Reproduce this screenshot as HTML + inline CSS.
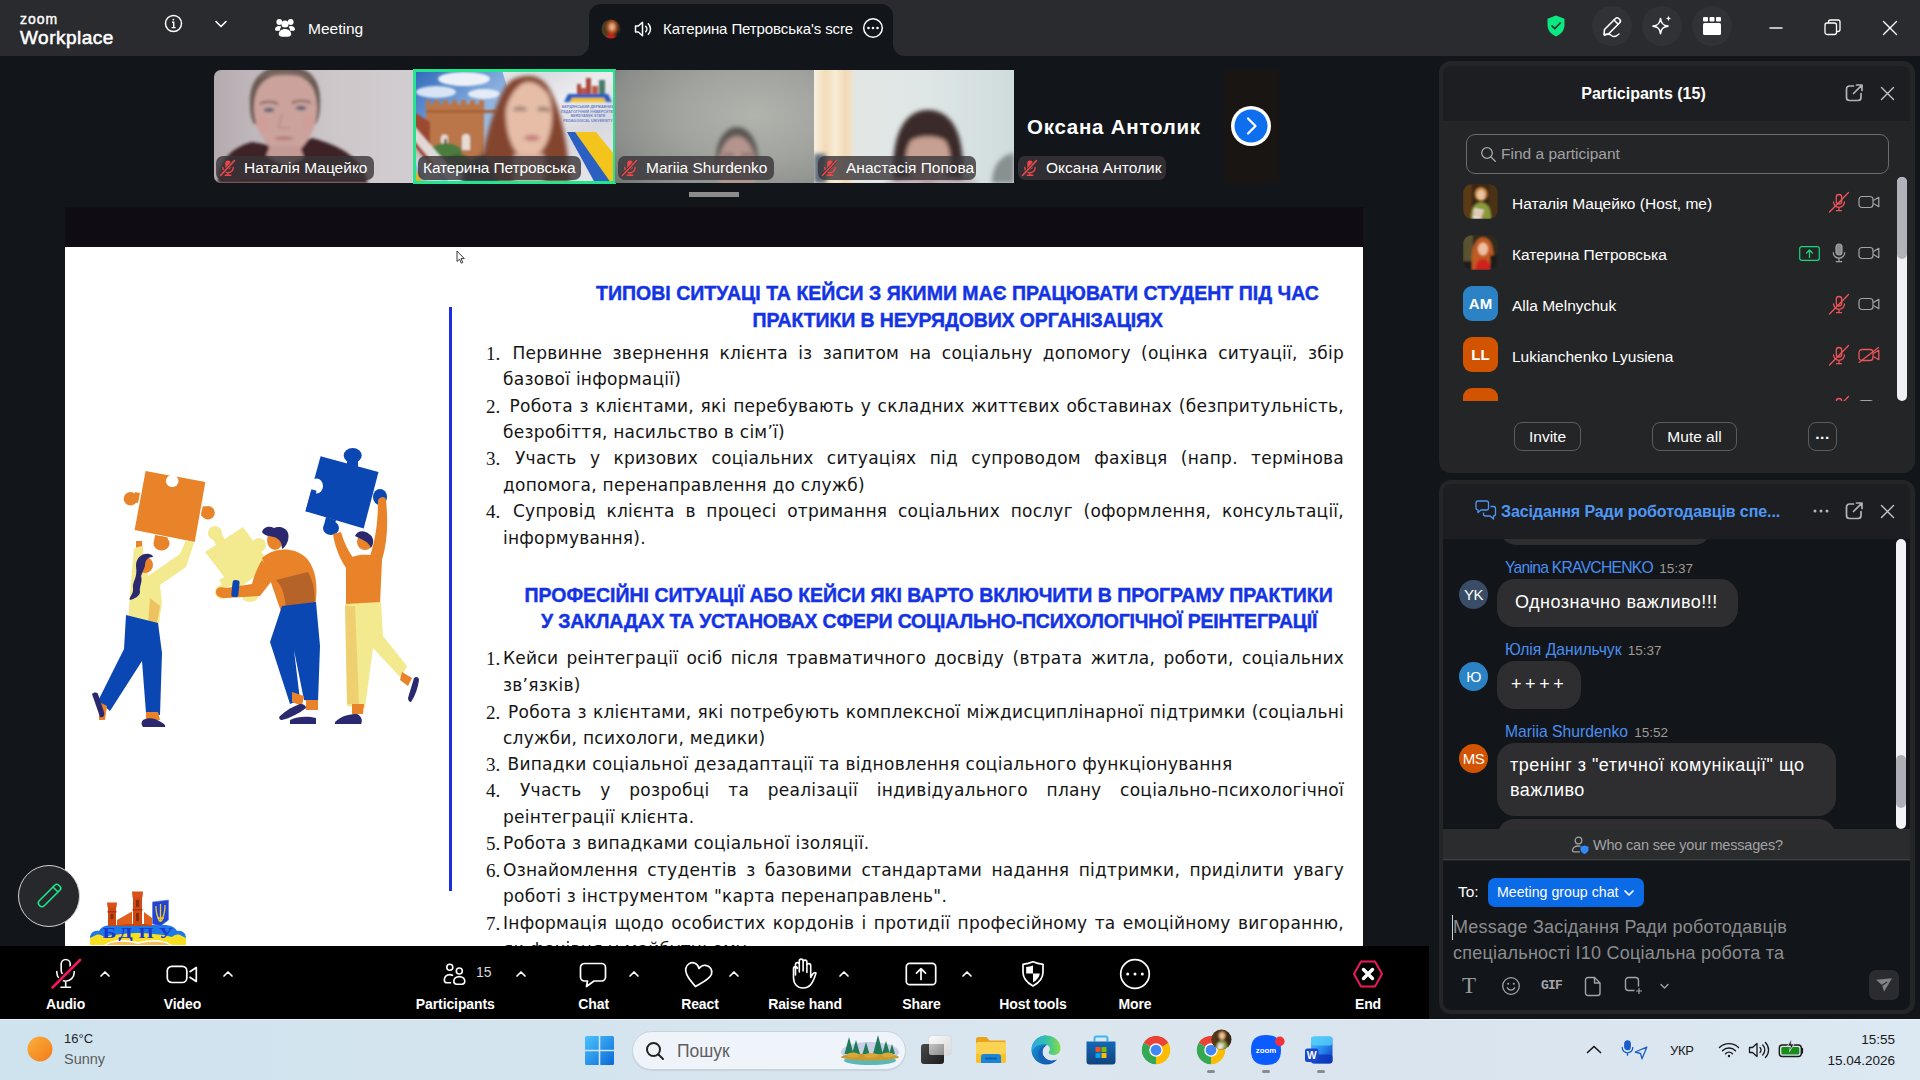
<!DOCTYPE html>
<html lang="uk">
<head>
<meta charset="utf-8">
<title>Zoom Workplace</title>
<style>
*{box-sizing:border-box;margin:0;padding:0}
html,body{width:1920px;height:1080px;overflow:hidden;background:#12161a;font-family:"Liberation Sans",sans-serif;color:#fff}
.abs{position:absolute}
#titlebar{position:absolute;left:0;top:0;width:1920px;height:56px;background:#2a2b2e}
#tab{position:absolute;left:589px;top:4px;width:304px;height:52px;background:#12161a;border-radius:12px 12px 0 0}
.tb-t{position:absolute;font-size:16px;color:#fff;white-space:nowrap}
#strip{position:absolute;left:0;top:56px;width:1438px;height:151px}
.tile{position:absolute;top:70px;width:199px;height:113px;overflow:hidden;background:#222}
.pill{position:absolute;left:2px;bottom:3px;height:24px;border-radius:7px;background:rgba(56,53,56,.8);font-size:15.500px;line-height:24px;color:#fff;padding:0 7px 0 28px;white-space:nowrap}
.pill svg{position:absolute;left:3px;top:3px}
#share{position:absolute;left:65px;top:207px;width:1298px;height:739px;background:#0f0d13;overflow:hidden}
#slide{position:absolute;left:0;top:40px;width:1298px;height:699px;background:#fff;color:#111}
#toolbar{position:absolute;left:0;top:946px;width:1429px;height:73px;background:#000}
.tbi{position:absolute;top:0;height:73px;text-align:center;font-weight:bold;font-size:15px;color:#fff;white-space:nowrap}
.tbi span{position:absolute;left:50%;transform:translateX(-50%);top:48px;line-height:20px}
.tbl{position:absolute;top:49px;width:120px;text-align:center;font-weight:bold;font-size:14px;line-height:18px;letter-spacing:-0.1px;color:#fff;white-space:nowrap}
#taskbar{position:absolute;left:0;top:1019px;width:1920px;height:61px;background:linear-gradient(90deg,#cfe3ee 0%,#d4e4ee 30%,#dbe6ef 55%,#d9e4ee 75%,#dce8f2 100%);border-top:1px solid #eaf1f6;color:#1b1b1b}
#ppanel{position:absolute;left:1439px;top:61px;width:476px;height:412px;background:#242527;border-radius:12px;overflow:hidden}
#cpanel{position:absolute;left:1439px;top:480px;width:476px;height:534px;background:#242527;border-radius:12px;overflow:hidden}
.pname{position:absolute;margin-top:1px;left:73px;font-size:15.500px;line-height:20px;color:#fff;white-space:nowrap}
.pbtn{position:absolute;top:361px;height:29px;border:1px solid #5c5c5e;border-radius:8px;font-size:15.500px;line-height:27px;text-align:center;color:#fff}
.bub{position:absolute;background:#2e2e30;border-radius:18px;font-size:18px;letter-spacing:.5px;line-height:46px;color:#fff;white-space:nowrap}
.cname{position:absolute;font-size:15px;line-height:20px;white-space:nowrap}
.cn{color:#4a8ef0;font-size:15.700px}
.ct{color:#a09a94;font-size:13.500px;margin-left:2px}
.cav{position:absolute;width:29px;height:29px;border-radius:15px;color:#fff;font-size:15px;line-height:29px;text-align:center;letter-spacing:-0.5px}
.sl{position:absolute;left:438px;width:841px;font-family:"DejaVu Sans","Liberation Sans",sans-serif;font-size:17px;letter-spacing:.25px;line-height:26px;color:#141414;white-space:nowrap}
.sl.j{text-align:justify;text-align-last:justify;white-space:normal}
.sn{position:absolute;left:421px;font-family:"Liberation Serif",serif;font-size:19px;line-height:26px;color:#141414}
.sh{position:absolute;font-weight:bold;font-size:19.500px;line-height:26px;color:#1434e4;white-space:nowrap;-webkit-text-stroke:.45px #1434e4}
</style>
</head>
<body>
<div id="titlebar">
<div class="abs" style="left:20px;top:10.500px;font-size:14px;line-height:16px;-webkit-text-stroke:0.4px #fff;letter-spacing:1px;color:#fff">zoom</div>
<div class="abs" style="left:20px;top:27px;font-size:19px;line-height:22px;-webkit-text-stroke:0.55px #fff;letter-spacing:0.5px;color:#fff">Workplace</div>
<svg class="abs" style="left:163px;top:13px" width="22" height="22" viewBox="0 0 22 22" fill="none" stroke="#fff" stroke-width="1.5"><circle cx="10.5" cy="10.5" r="8"/><path d="M9 9.2h1.7v5.2M8.6 14.6h4" stroke-width="1.4"/><circle cx="10.4" cy="6.6" r="0.9" fill="#fff" stroke="none"/></svg>
<svg class="abs" style="left:214px;top:19px" width="14" height="10" viewBox="0 0 14 10" fill="none" stroke="#fff" stroke-width="1.6" stroke-linecap="round" stroke-linejoin="round"><path d="M2 2.5l5 5 5-5"/></svg>
<svg class="abs" style="left:274px;top:17px" width="22" height="22" viewBox="0 0 22 22" fill="#fff"><circle cx="5.3" cy="5" r="2.9"/><circle cx="16.7" cy="5" r="2.9"/><circle cx="11" cy="7" r="3.6"/><path d="M1 12.5c0-2 1.7-3.4 4-3.4 1 0 1.8.2 2.5.7-.9 1-1.6 2.3-1.6 3.9H2.2C1.500 13.700 1 13.200 1 12.500z"/><path d="M21 12.5c0-2-1.7-3.4-4-3.4-1 0-1.800.200-2.500.7.9 1 1.600 2.300 1.600 3.900h3.700c.7 0 1.200-.5 1.200-1.200z"/><path d="M4.800 17.200c0-3 2.700-5.200 6.200-5.200s6.200 2.200 6.200 5.200c0 1.600-1.500 2.600-6.200 2.600s-6.200-1-6.200-2.600z"/></svg>
<div class="tb-t" style="left:308px;top:20px;line-height:18px;font-size:15.500px">Meeting</div>
<div id="tab">
<svg class="abs" style="left:-12px;bottom:0" width="12" height="12"><path d="M12 0v12H0A12 12 0 0 0 12 0z" fill="#12161a"/></svg>
<svg class="abs" style="right:-12px;bottom:0" width="12" height="12"><path d="M0 0v12h12A12 12 0 0 1 0 0z" fill="#12161a"/></svg>
<svg class="abs" style="left:12px;top:15px" width="20" height="20" viewBox="0 0 20 20"><defs><clipPath id="avc"><circle cx="10" cy="10" r="9.5"/></clipPath><filter id="b1"><feGaussianBlur stdDeviation="0.8"/></filter></defs><g clip-path="url(#avc)"><rect width="20" height="20" fill="#3a2a1c"/><g filter="url(#b1)"><rect x="0" y="0" width="6" height="20" fill="#4a3c22"/><ellipse cx="11" cy="8" rx="5.500" ry="7" fill="#b5561f"/><ellipse cx="11" cy="8" rx="2.800" ry="3.500" fill="#e3b08c"/><ellipse cx="10" cy="18" rx="4" ry="4" fill="#c0221e"/><rect x="15" y="12" width="5" height="8" fill="#1c1a18"/></g></g></svg>
<svg class="abs" style="left:44px;top:14px" width="22" height="22" viewBox="0 0 22 22" fill="none" stroke="#fff" stroke-width="1.500" stroke-linejoin="round" stroke-linecap="round"><path d="M2.500 8h2.800l4.200-3.800v13.600L5.300 14H2.500z"/><path d="M12.700 8.200a4 4 0 0 1 0 5.600M15.300 5.800a7.300 7.300 0 0 1 0 10.400"/></svg>
<div class="tb-t" style="left:74px;top:16px;line-height:18px;font-size:15px;letter-spacing:-0.1px">Катерина Петровська's scre</div>
<svg class="abs" style="left:273px;top:13px" width="22" height="22" viewBox="0 0 22 22"><circle cx="11" cy="11" r="9.300" fill="none" stroke="#fff" stroke-width="1.500"/><circle cx="6.500" cy="11" r="1.300" fill="#fff"/><circle cx="11" cy="11" r="1.300" fill="#fff"/><circle cx="15.500" cy="11" r="1.300" fill="#fff"/></svg>
</div>
<svg class="abs" style="left:1546px;top:15px" width="20" height="22" viewBox="0 0 20 22"><path d="M10 0.500l8.500 3.200v6.300c0 5.300-3.500 9.300-8.500 11.500C5 19.300 1.500 15.300 1.500 10V3.700z" fill="#0be881"/><path d="M6 10.800l2.800 2.800 5.400-5.600" fill="none" stroke="#1b3b2b" stroke-width="1.700" stroke-linecap="round" stroke-linejoin="round"/></svg>
<div class="abs" style="left:1592px;top:6px;width:40px;height:40px;border-radius:20px;background:#313236"></div>
<div class="abs" style="left:1642px;top:6px;width:40px;height:40px;border-radius:20px;background:#313236"></div>
<div class="abs" style="left:1692px;top:6px;width:40px;height:40px;border-radius:20px;background:#313236"></div>
<svg class="abs" style="left:1601px;top:14px" width="24" height="24" viewBox="0 0 24 24" fill="none" stroke="#fff" stroke-width="1.600" stroke-linecap="round" stroke-linejoin="round"><path d="M3.500 15.500L14.500 4.500a2.300 2.300 0 0 1 3.200 0l1 1a2.300 2.300 0 0 1 0 3.200L7.700 19.700l-4.700 1z"/><path d="M13 6l4.200 4.200"/><path d="M3.500 21.500c3-1.800 5-1.800 7 0s5 .8 7.500-1.500" stroke-width="1.300"/></svg>
<svg class="abs" style="left:1650px;top:14px" width="24" height="24" viewBox="0 0 24 24" fill="none" stroke="#fff" stroke-width="1.600" stroke-linejoin="round"><path d="M10.500 4.500c.6 5 2.500 7 7.500 7.600-5 .6-6.900 2.600-7.500 7.600-.6-5-2.500-7-7.500-7.600 5-.6 6.900-2.600 7.500-7.600z"/><path d="M18.500 1.500c.3 2 1 2.700 3 3-2 .3-2.700 1-3 3-.3-2-1-2.700-3-3 2-.3 2.700-1 3-3z" fill="#fff" stroke="none"/></svg>
<svg class="abs" style="left:1702px;top:16px" width="20" height="20" viewBox="0 0 20 20" fill="#fff"><rect x="1" y="1" width="5" height="4.500" rx="1"/><rect x="7.500" y="1" width="5" height="4.500" rx="1"/><rect x="14" y="1" width="5" height="4.500" rx="1"/><rect x="1" y="7" width="18" height="12" rx="1.500"/></svg>
<svg class="abs" style="left:1768px;top:20px" width="16" height="16" viewBox="0 0 16 16" stroke="#fff" stroke-width="1.400" fill="none"><path d="M1.500 8h13"/></svg>
<svg class="abs" style="left:1824px;top:19px" width="17" height="17" viewBox="0 0 17 17" stroke="#fff" stroke-width="1.300" fill="none"><rect x="1" y="4" width="11.500" height="11.500" rx="2"/><path d="M4.500 4V3a2 2 0 0 1 2-2h7.500a2 2 0 0 1 2 2v7.500a2 2 0 0 1-2 2h-1.500"/></svg>
<svg class="abs" style="left:1882px;top:20px" width="16" height="16" viewBox="0 0 16 16" stroke="#fff" stroke-width="1.400" fill="none" stroke-linecap="round"><path d="M1.500 1.500l13 13M14.500 1.500l-13 13"/></svg>
</div>
<div id="strip">
<svg width="0" height="0" style="position:absolute"><defs>
<filter id="bl2" x="-20%" y="-20%" width="140%" height="140%"><feGaussianBlur stdDeviation="2"/></filter>
<filter id="bl3" x="-20%" y="-20%" width="140%" height="140%"><feGaussianBlur stdDeviation="3.500"/></filter>
<filter id="bl1" x="-20%" y="-20%" width="140%" height="140%"><feGaussianBlur stdDeviation="1"/></filter>
</defs></svg>
</div>
<!-- tile 1 -->
<div class="tile" style="left:214px;border-radius:7px 0 0 7px">
<svg width="199" height="113" viewBox="0 0 199 113">
<defs><linearGradient id="t1bg" x1="0" x2="1"><stop offset="0" stop-color="#b4abaf"/><stop offset=".2" stop-color="#bfb7bb"/><stop offset=".6" stop-color="#cdc7ca"/><stop offset="1" stop-color="#d2cdd0"/></linearGradient>
<filter id="bl15" x="-20%" y="-20%" width="140%" height="140%"><feGaussianBlur stdDeviation="1.500"/></filter></defs>
<rect width="199" height="113" fill="url(#t1bg)"/>
<g filter="url(#bl15)">
<path d="M4 113C4 92 16 78 38 72l34 6 26-10c30 8 50 20 56 45z" fill="#3e2428"/>
<path d="M36 36C34 10 48-4 72-4s36 14 34 40c0 8-2 14-4 18H40c-2-4-4-10-4-18z" fill="#6c5c54"/>
<path d="M40 38C40 16 52 4 72 4s31 12 31 34c0 12-3 22-8 30-6 10-14 18-24 18S55 78 49 68c-5-8-9-18-9-30z" fill="#cba29c"/>
<path d="M56 76h30l4 12-18 8-20-10z" fill="#c49a94"/>
<path d="M46 34c4-3 12-3 18 0M78 33c6-3 14-3 19 0" stroke="#7a6258" stroke-width="2" fill="none"/>
<ellipse cx="55" cy="40" rx="5.500" ry="2.200" fill="#5c6474"/><ellipse cx="87" cy="38" rx="5.500" ry="2.200" fill="#5c6474"/>
<path d="M68 44c-1 6-3 10-3 13 2 2 8 2 11 0" stroke="#b88884" stroke-width="1.500" fill="none"/>
<path d="M60 68c5-2 14-2 20 0-4 3-15 3-20 0z" fill="#b4787a"/>
<ellipse cx="48" cy="54" rx="6" ry="7" fill="#d49a98" opacity=".6"/><ellipse cx="94" cy="52" rx="6" ry="7" fill="#d49a98" opacity=".6"/>
<path d="M44 8c8-8 44-10 56 2-14-6-40-6-56-2z" fill="#7c6c62"/>
</g>
</svg>
<div class="pill"><svg width="18" height="18" viewBox="0 0 18 18" fill="none"><rect x="6.300" y="1.500" width="5.400" height="9" rx="2.700" fill="#f0464a"/><path d="M3.800 8.500a5.200 5.200 0 0 0 10.400 0M9 13.700v2.300M6.200 16.200h5.600" stroke="#f0464a" stroke-width="1.400" stroke-linecap="round"/><path d="M1.500 16.500L15.500 1.500" stroke="#3c3a3d" stroke-width="3.200"/><path d="M1.500 16.500L15.500 1.500" stroke="#f0464a" stroke-width="1.500" stroke-linecap="round"/></svg>Наталія Мацейко</div>
</div>
<!-- tile 2 active -->
<div class="tile" style="left:414px;width:200px">
<svg width="200" height="113" viewBox="0 0 200 113">
<defs><linearGradient id="sky" x1="0" y1="0" x2="1" y2="1"><stop offset="0" stop-color="#2f68ba"/><stop offset=".45" stop-color="#8fb4e0"/><stop offset="1" stop-color="#dfe8f2"/></linearGradient>
<linearGradient id="rbg" x1="0" y1="0" x2="1" y2="1"><stop offset="0" stop-color="#f0f0f4"/><stop offset=".35" stop-color="#dcdce2"/><stop offset=".5" stop-color="#ececf0"/><stop offset=".7" stop-color="#d8d8de"/><stop offset="1" stop-color="#e8e8ec"/></linearGradient></defs>
<rect width="200" height="113" fill="url(#rbg)"/>
<path d="M0 0h88l34 113H0z" fill="url(#sky)"/>
<g filter="url(#bl1)">
<ellipse cx="50" cy="9" rx="26" ry="7" fill="#f2f5fa" opacity=".95"/><ellipse cx="22" cy="22" rx="20" ry="6" fill="#e6eef8" opacity=".9"/><ellipse cx="70" cy="24" rx="16" ry="5" fill="#eef3fa" opacity=".9"/>
<path d="M12 36v-6h4v4h4v-4h5v4h4v-4h5v4h4v-4h5v4h4v-4h5v4h4v-4h5v4h4v-4h5v66H12z" fill="#ba7648"/>
<path d="M12 40h70v3H12z" fill="#a86238"/>
<path d="M0 42l16 10v36H0z" fill="#9c4a32"/>
<path d="M27 78v-10a3.500 3.500 0 0 1 7 0v10zM48 80v-12a4 4 0 0 1 8 0v12z" fill="#e6dcd4"/>
<path d="M30 78v-8a1.500 1.500 0 0 1 3 0v8z" fill="#7a5a48"/>
<ellipse cx="32" cy="82" rx="16" ry="9" fill="#4c7c3c"/><ellipse cx="44" cy="92" rx="12" ry="8" fill="#3e6a32"/>
<path d="M0 56l50 57H36L0 70z" fill="#f0f0f2" opacity=".85"/>
<path d="M0 76l30 37H14L0 92z" fill="#d8d8dc" opacity=".8"/>
<path d="M0 98l10 15H0z" fill="#e0b428"/>
</g>
<path d="M160 62h22l18 22v29h-4z" fill="#f2c41c"/>
<path d="M153 62h8l36 51h-16z" fill="#2c5fc2"/>
<g filter="url(#bl1)">
<rect x="163" y="14" width="4" height="12" fill="#a8483a"/><rect x="172" y="8" width="5" height="18" fill="#a8483a"/><rect x="167" y="18" width="5" height="8" fill="#b85a44"/><rect x="178" y="16" width="6" height="10" fill="#b85a44"/><rect x="185" y="10" width="6" height="16" fill="#4a7a6a"/>
<path d="M154 24h40l4 8h-48z" fill="#2c5fc2"/><path d="M158 28h32l2 4h-36z" fill="#f2c41c"/>
</g>
<g fill="#6a84c8" font-family="Liberation Sans, sans-serif" font-weight="bold" font-size="3.600" text-anchor="middle"><text x="174" y="38">БЕРДЯНСЬКИЙ ДЕРЖАВНИЙ</text><text x="174" y="42.500">ПЕДАГОГІЧНИЙ УНІВЕРСИТЕТ</text><text x="174" y="47">BERDYANSK STATE</text><text x="174" y="51.500">PEDAGOGICAL UNIVERSITY</text></g>
<g filter="url(#bl2)">
<path d="M66 113C66 84 78 40 92 16c8-12 30-14 40-2 14 18 22 60 24 99z" fill="#84442e"/>
<path d="M92 44c0-20 10-34 24-34s22 14 22 36c0 22-10 42-24 42s-22-22-22-44z" fill="#e6bea8"/>
<path d="M90 46c2-26 12-40 25-40 10 0 18 6 22 22-8-12-16-16-22-16-10 0-20 12-25 34z" fill="#84442e"/>
<path d="M100 40c4-2 8-2 12 0M124 40c4-2 8-1 11 1" stroke="#3a2a28" stroke-width="2.500" fill="none"/>
<ellipse cx="118" cy="68" rx="8" ry="2.500" fill="#b86c6c"/>
<path d="M100 84h30v29h-30z" fill="#d8ac98"/>
<path d="M48 113c0-16 8-26 24-28l14 28z" fill="#2c3830"/>
</g>
</svg>
<div class="pill" style="padding:0 5px 0 5px;left:4px;bottom:3px;letter-spacing:-0.12px">Катерина Петровська</div>
</div>
<div class="abs" style="left:413px;top:69px;width:203px;height:115px;border:3px solid #23e58d"></div>
<!-- tile 3 -->
<div class="tile" style="left:615px">
<svg width="199" height="113" viewBox="0 0 199 113">
<defs><radialGradient id="t3bg" cx=".7" cy=".4" r=".9"><stop offset="0" stop-color="#b1b3ad"/><stop offset=".45" stop-color="#a1a39e"/><stop offset=".8" stop-color="#8b8e8a"/><stop offset="1" stop-color="#747774"/></radialGradient></defs>
<rect width="199" height="113" fill="url(#t3bg)"/>
<g filter="url(#bl2)">
<ellipse cx="122" cy="88" rx="21" ry="31" fill="#5a5652"/>
<ellipse cx="122" cy="99" rx="19" ry="33" fill="#b4958e"/>
<path d="M108 86c4-2 8-2 11 0M126 86c4-2 8-2 11 0" stroke="#5a4a48" stroke-width="2" fill="none"/>
</g>
</svg>
<div class="pill" style="left:3px"><svg width="18" height="18" viewBox="0 0 18 18" fill="none"><rect x="6.300" y="1.500" width="5.400" height="9" rx="2.700" fill="#f0464a"/><path d="M3.800 8.500a5.200 5.200 0 0 0 10.400 0M9 13.700v2.300M6.200 16.200h5.600" stroke="#f0464a" stroke-width="1.400" stroke-linecap="round"/><path d="M1.500 16.500L15.500 1.500" stroke="#3c3a3d" stroke-width="3.200"/><path d="M1.500 16.500L15.500 1.500" stroke="#f0464a" stroke-width="1.500" stroke-linecap="round"/></svg>Mariia Shurdenko</div>
</div>
<!-- tile 4 -->
<div class="tile" style="left:814px;width:200px">
<svg width="200" height="113" viewBox="0 0 200 113">
<defs><linearGradient id="t4bg" x1="0" x2="1"><stop offset="0" stop-color="#e4e8e4"/><stop offset=".55" stop-color="#dfe6e6"/><stop offset="1" stop-color="#cfdcdc"/></linearGradient>
<linearGradient id="cur" x1="0" x2="1"><stop offset="0" stop-color="#f7efe0"/><stop offset=".3" stop-color="#f3dcb8"/><stop offset=".55" stop-color="#f8ecd6"/><stop offset=".8" stop-color="#f1d9b6"/><stop offset="1" stop-color="#f0e4d0"/></linearGradient></defs>
<rect width="200" height="113" fill="url(#t4bg)"/>
<rect x="0" y="0" width="39" height="113" fill="url(#cur)"/>
<g filter="url(#bl2)">
<path d="M0 84h12v29H0z" fill="#5a6a7a"/>
<path d="M80 113C76 70 88 40 114 40c28 0 38 32 34 73z" fill="#3a2a2c"/>
<ellipse cx="114" cy="88" rx="22" ry="28" fill="#c8a092"/>
<path d="M92 74c6-22 38-22 44 0-10-10-34-10-44 0z" fill="#3a2a2c"/>
<path d="M178 113c0-16 8-28 22-30v30z" fill="#889090"/>
<path d="M70 113c10-8 80-8 96 0z" fill="#b8a0a8"/>
</g>
</svg>
<div class="pill" style="left:4px;padding-right:2px"><svg width="18" height="18" viewBox="0 0 18 18" fill="none"><rect x="6.300" y="1.500" width="5.400" height="9" rx="2.700" fill="#f0464a"/><path d="M3.800 8.500a5.200 5.200 0 0 0 10.400 0M9 13.700v2.300M6.200 16.200h5.600" stroke="#f0464a" stroke-width="1.400" stroke-linecap="round"/><path d="M1.500 16.500L15.500 1.500" stroke="#3c3a3d" stroke-width="3.200"/><path d="M1.500 16.500L15.500 1.500" stroke="#f0464a" stroke-width="1.500" stroke-linecap="round"/></svg>Анастасія Попова</div>
</div>
<!-- tile 5 name -->
<div class="abs" style="left:1027px;top:114px;font-size:20.500px;line-height:26px;font-weight:bold;color:#fff;white-space:nowrap;letter-spacing:0.75px" id="bigname">Оксана Антолик</div>
<div class="abs" style="left:1014px;top:70px;width:200px;height:113px"><div class="pill" style="left:4px;padding-right:5px"><svg width="18" height="18" viewBox="0 0 18 18" fill="none"><rect x="6.300" y="1.500" width="5.400" height="9" rx="2.700" fill="#f0464a"/><path d="M3.800 8.500a5.200 5.200 0 0 0 10.400 0M9 13.700v2.300M6.200 16.200h5.600" stroke="#f0464a" stroke-width="1.400" stroke-linecap="round"/><path d="M1.500 16.500L15.500 1.500" stroke="#3c3a3d" stroke-width="3.200"/><path d="M1.500 16.500L15.500 1.500" stroke="#f0464a" stroke-width="1.500" stroke-linecap="round"/></svg>Оксана Антолик</div></div>
<div class="abs" style="left:1224px;top:70px;width:55px;height:113px;background:#191513"></div>
<svg class="abs" style="left:1230px;top:105px" width="42" height="42" viewBox="0 0 42 42"><circle cx="21" cy="21" r="20" fill="#fff"/><circle cx="21" cy="21" r="16.500" fill="#0e6fee"/><path d="M18 13.500l7.500 7.500-7.500 7.500" fill="none" stroke="#fff" stroke-width="2.200" stroke-linecap="round" stroke-linejoin="round"/></svg>
<div class="abs" style="left:689px;top:192px;width:50px;height:5px;background:#8c8c8c"></div>

<div id="share"><div id="slide">
<svg class="abs" style="left:0;top:0" width="420" height="699" viewBox="65 247 420 699">
<g stroke-linejoin="round" stroke-linecap="round">
<!-- orange piece -->
<g fill="#e8832a">
<path d="M145.600 471l24 4.400a6 6 0 1 0 6.500 1.200L205.400 482 194.700 542 134.600 530z"/>
<circle cx="130.500" cy="498.700" r="6.800"/><circle cx="208" cy="512.800" r="6.800"/><ellipse cx="161.500" cy="543.500" rx="8" ry="7"/>
<path d="M135 492l5 1-2 10-5-1zM203 506l5 1-2 10-5-1zM155 535l13 2.500-2 6-12-2z"/>
</g>
<circle cx="172.500" cy="481" r="6" fill="#fff"/>
<!-- blue piece -->
<g fill="#0b47b2">
<path d="M320.600 456.200L378.500 472 363.700 528.600 305.500 511.300z"/>
<ellipse cx="352.700" cy="455.500" rx="9" ry="7.500"/><ellipse cx="331" cy="528" rx="8" ry="7"/><ellipse cx="380" cy="497" rx="7" ry="8"/>
<path d="M347 460h11v8h-11zM326 517l10 3-2 8-10-3z"/>
</g>
<ellipse cx="316.500" cy="486" rx="6.500" ry="7.500" fill="#fff"/>
<path d="M305.500 511.300l6-22 5 1.500-4 22z" fill="#0b47b2"/>
<!-- pale yellow piece -->
<g fill="#f3e98f">
<path d="M205 552l38-25 28 38-36 26z"/>
<circle cx="215" cy="533" r="7"/><path d="M212 538l10-4 5 9-9 5z"/>
<circle cx="259" cy="545" r="7"/>
<circle cx="222" cy="592" r="7"/><path d="M219 580l9-5 4 10-8 4z"/>
<ellipse cx="250" cy="597" rx="8" ry="5"/>
</g>
<circle cx="205" cy="569" r="6" fill="#fff"/>
<!-- woman -->
<path d="M136 541l6 0 2 32-8 4z" fill="#e8832a"/>
<path d="M186 541l7 2-6 18-6-3z" fill="#e8832a"/>
<path d="M134 548l8-2 6 30 32-22 6-14 8 3-8 24-26 18 2 18-4 26-30-6 2-30z" fill="#f3e98f"/>
<path d="M150 598l10 8-4 22-8-4z" fill="#e9a23a" opacity=".55"/>
<circle cx="145" cy="565" r="8" fill="#e8832a"/>
<path d="M136 566c0-8 6-13 13-12 3 .5 4 2 4 3-6 0-8 4-8 9l-4 10c2 6-2 10-1 16 0 4-6 7-10 8-2-2 4-6 3-12-1-6 5-10 3-22z" fill="#2a2970"/>
<path d="M126 615l32 8 4 30-2 62-14-2-4-52-32 50-12-10 26-52z" fill="#0b47b2"/>
<path d="M99 702l8 4-2 14-6 0z" fill="#e8832a"/><path d="M146 712h12l2 8h-14z" fill="#e8832a"/>
<path d="M92 694c2-2 5-2 6 0l6 18c1 4-1 6-4 5z" fill="#2a2970"/>
<path d="M143 720c6-3 12-2 18 2 3 2 5 3 4 5h-22c-2-2-2-5 0-7z" fill="#2a2970"/>
<!-- middle man -->
<path d="M262 560c-4 6-8 16-10 24l-26 4c-6-2-10 0-10 4s4 6 10 6l34-2 14-18z" fill="#e8832a"/>
<path d="M262 558c10-10 30-12 42-2 10 8 14 24 12 44l-2 12-32 2c-6-16-12-36-20-56z" fill="#e8832a"/>
<path d="M276 580c6 6 10 16 10 34l28-6c2-12 0-26-6-36z" fill="#7a3c2a" opacity=".45"/>
<rect x="232" y="580" width="7" height="17" rx="2.500" transform="rotate(6 235 588)" fill="#0b47b2"/>
<ellipse cx="275" cy="540" rx="8" ry="10" fill="#e8832a"/>
<path d="M262 532c2-6 8-6 12-4 4-2 12-1 14 5 2 6-2 14-6 16 0-6-2-10-8-12-4-1-10-1-12-5z" fill="#2a2970"/>
<path d="M282 606l34-4 4 44-2 56-14-2-10-50 6 50-10 4-20-62z" fill="#0b47b2"/>
<path d="M292 692l12 4-2 10-10-4zM306 700h12v10h-12z" fill="#e8832a"/>
<path d="M280 716c6-6 14-10 20-12 4 0 6 2 6 4-8 6-16 10-24 12-2 0-4-2-2-4z" fill="#2a2970"/>
<path d="M290 720c8-4 18-4 26-2v6h-26z" fill="#2a2970"/>
<!-- right man -->
<path d="M333 534l8-2c4 14 10 24 16 30l-8 10c-8-10-14-24-16-38z" fill="#e8832a"/>
<path d="M378 500c2-4 8-4 8 0 2 20 2 40-4 60l-12-4c6-18 8-36 8-56z" fill="#e8832a"/>
<path d="M346 560c8-6 28-8 36 0l-2 44-34 2z" fill="#e8832a"/>
<circle cx="365" cy="542" r="8" fill="#e8832a"/>
<path d="M355 536c2-6 10-6 14-2 4 2 6 8 2 14-2-6-8-8-16-12z" fill="#2a2970"/>
<path d="M345 604l36-2 2 34 24 30-6 12-28-30-8 60-18-2z" fill="#f3e98f"/>
<path d="M345 606l10 0 4 98-12 0z" fill="#e9a23a" opacity=".35"/>
<path d="M352 704h12l-1 10h-11zM402 672l10 6-4 8-8-6z" fill="#e8832a"/>
<path d="M335 722c6-6 14-8 22-8 4 2 6 6 4 10h-26z" fill="#2a2970"/>
<path d="M414 678c2-2 5-1 5 2-1 8-4 16-8 22-2 0-3-2-3-4z" fill="#2a2970"/>
</g>
<!-- logo -->
<g>
<path d="M90 945v-8c2-4 6-6 10-5 2-4 6-6 12-6h52c6 0 10 2 12 6 4-1 8 1 10 5v8z" fill="#f8e020"/>
<path d="M90 938c0-5 4-8 9-7 2-4 7-6 13-6h52c6 0 11 2 13 6 5-1 9 2 9 7l-6-3c-3-1-6 0-8 2-10-3-28-4-34-4s-24 1-34 4c-2-2-5-3-8-2z" fill="#1e78e8"/>
<path d="M104 945c8-6 20-6 34-3 14-3 26-3 34 3z" fill="#fff"/>
<path d="M106 945c8-4 20-4 32-1 12-3 24-3 32 1z" fill="#f5a81c" opacity=".75"/>
<rect x="108" y="906" width="8" height="20" fill="#cf4a12"/><path d="M107 902.500h10l-.5 5h-9z" fill="#d8521a"/><rect x="107.500" y="911" width="9" height="1.500" fill="#a83808"/><rect x="110.500" y="914" width="3" height="5" fill="#8a2c08"/>
<rect x="133" y="896" width="9" height="30" fill="#cf4a12"/><path d="M132 891.500h11l-.5 6h-10z" fill="#d8521a"/><rect x="132.500" y="909" width="10" height="1.500" fill="#a83808"/><rect x="136" y="900" width="3" height="7" fill="#8a2c08"/><rect x="136" y="913" width="3" height="8" fill="#8a2c08"/>
<path d="M117 920l15-8.500V926h-15zM144 912l8 6v8h-8z" fill="#e0601e"/>
<path d="M116 926c8-3 32-3 38 0z" fill="#c84810"/>
<path d="M152.500 902l16-2v20l-8 6-8-2z" fill="#2244d4" stroke="#5a78e8" stroke-width=".6"/>
<path d="M160.500 904v18M156 906c0 6 1 10 2.500 12 0 2 1 3 2 3M165 905c0 6-1 10-2.500 13 0 2-1 3-2 3M157 918h7" stroke="#f0c828" stroke-width="1.300" fill="none"/>
<g font-family="Liberation Serif, serif" font-weight="bold" font-size="14.500" fill="#1838d0" text-anchor="middle"><text transform="translate(109.500 938) scale(1.450 1)">Б</text><text transform="translate(125.500 938) scale(1.450 1)">Д</text><text transform="translate(146 938) scale(1.350 1)">П</text><text transform="translate(166 938) scale(1.350 1)">У</text></g>
</g>
</svg>
<div class="abs" style="left:384px;top:60px;width:3px;height:584px;background:#1b2ee6"></div>
<div class="sh" style="top:33px;left:531px;letter-spacing:0.02px">ТИПОВІ СИТУАЦІ ТА КЕЙСИ З ЯКИМИ МАЄ ПРАЦЮВАТИ СТУДЕНТ ПІД ЧАС</div>
<div class="sh" style="top:59.5px;left:687.5px;letter-spacing:-0.12px">ПРАКТИКИ В НЕУРЯДОВИХ ОРГАНІЗАЦІЯХ</div>
<div class="sn" style="top:94px">1.</div>
<div class="sl j" style="top:93px;text-indent:9.5px;">Первинне звернення клієнта із запитом на соціальну допомогу (оцінка ситуації, збір</div>
<div class="sl" style="top:119px;">базової інформації)</div>
<div class="sn" style="top:147px">2.</div>
<div class="sl j" style="top:146px;text-indent:6.5px;">Робота з клієнтами, які перебувають у складних життєвих обставинах (безпритульність,</div>
<div class="sl" style="top:172px;">безробіття, насильство в сім’ї)</div>
<div class="sn" style="top:199px">3.</div>
<div class="sl j" style="top:198px;text-indent:12px;">Участь у кризових соціальних ситуаціях під супроводом фахівця (напр. термінова</div>
<div class="sl" style="top:224.5px;">допомога, перенаправлення до служб)</div>
<div class="sn" style="top:252px">4.</div>
<div class="sl j" style="top:251px;text-indent:10px;">Супровід клієнта в процесі отримання соціальних послуг (оформлення, консультації,</div>
<div class="sl" style="top:277.5px;">інформування).</div>
<div class="sh" style="top:335px;left:459.5px;letter-spacing:-0.01px">ПРОФЕСІЙНІ СИТУАЦІЇ АБО КЕЙСИ ЯКІ ВАРТО ВКЛЮЧИТИ В ПРОГРАМУ ПРАКТИКИ</div>
<div class="sh" style="top:361px;left:476px;letter-spacing:-0.19px">У ЗАКЛАДАХ ТА УСТАНОВАХ СФЕРИ СОЦІАЛЬНО-ПСИХОЛОГІЧНОЇ РЕІНТЕГРАЦІЇ</div>
<div class="sn" style="top:399px">1.</div>
<div class="sl j" style="top:398px;">Кейси реінтеграції осіб після травматичного досвіду (втрата житла, роботи, соціальних</div>
<div class="sl" style="top:425px;">зв’язків)</div>
<div class="sn" style="top:453px">2.</div>
<div class="sl j" style="top:452px;text-indent:5px;">Робота з клієнтами, які потребують комплексної міждисциплінарної підтримки (соціальні</div>
<div class="sl" style="top:477.5px;">служби, психологи, медики)</div>
<div class="sn" style="top:505px">3.</div>
<div class="sl" style="top:504px;text-indent:4.5px;">Випадки соціальної дезадаптації та відновлення соціального функціонування</div>
<div class="sn" style="top:531px">4.</div>
<div class="sl j" style="top:530px;text-indent:17px;">Участь у розробці та реалізації індивідуального плану соціально-психологічної</div>
<div class="sl" style="top:557px;">реінтеграції клієнта.</div>
<div class="sn" style="top:584px">5.</div>
<div class="sl" style="top:583px;">Робота з випадками соціальної ізоляції.</div>
<div class="sn" style="top:610.5px">6.</div>
<div class="sl j" style="top:609.5px;">Ознайомлення студентів з базовими стандартами надання підтримки, приділити увагу</div>
<div class="sl" style="top:636px;">роботі з інструментом "карта перенаправлень".</div>
<div class="sn" style="top:663.5px">7.</div>
<div class="sl j" style="top:662.5px;">Інформація щодо особистих кордонів і протидії професійному та емоційному вигоранню,</div>
<div class="sl" style="top:688.5px;">як фахівця у майбутньому.</div>
</div></div>
<div class="abs" style="left:18px;top:865px;width:62px;height:62px;border-radius:31px;background:#26282c;border:1.500px solid #d2d2d2"></div>
<svg class="abs" style="left:34px;top:881px" width="30" height="30" viewBox="0 0 30 30" fill="none" stroke="#19e58a" stroke-width="1.600" stroke-linejoin="round" stroke-linecap="round"><path d="M5.500 24.500c-1.500-1.500-1.500-3.500 0-5L19 6l5 5L10.500 24.500c-1.500 1.500-3.500 1.500-5 0z"/><path d="M19 6l2-2c1-1 2.500-1 3.500 0l1.500 1.500c1 1 1 2.500 0 3.500l-2 2"/></svg>
<svg class="abs" style="left:456px;top:250px" width="10" height="15" viewBox="0 0 10 15"><path d="M1 1v10.500l2.500-2.300 1.800 4 1.500-.7-1.800-3.900H8.300z" fill="#fff" stroke="#222" stroke-width=".9" stroke-linejoin="round"/></svg>
<div id="toolbar">
<svg class="abs" style="left:50px;top:11px" width="32" height="32" viewBox="0 0 32 32" fill="none" stroke="#fff" stroke-width="1.600" stroke-linecap="round"><rect x="11.200" y="2.500" width="9" height="15.500" rx="4.500"/><path d="M6.800 14.500v1a8.700 8.700 0 0 0 17.400 0v-1M15.700 24.500v5.500M11 30.300h9.500"/><path d="M2.500 30.500L30 3" stroke="#000" stroke-width="5"/><path d="M2.500 30.500L30 3" stroke="#f2185c" stroke-width="2.600"/></svg>
<svg class="abs" style="left:99px;top:23px" width="12" height="10" viewBox="0 0 12 10" fill="none" stroke="#fff" stroke-width="1.700" stroke-linecap="round" stroke-linejoin="round"><path d="M2 7l4-4 4 4"/></svg><div class="tbl" style="left:5.5px">Audio</div>
<svg class="abs" style="left:166px;top:19px" width="32" height="19" viewBox="0 0 32 19" fill="none" stroke="#fff" stroke-width="1.700" stroke-linejoin="round"><rect x="1.300" y="1.300" width="19.500" height="16.200" rx="4.500"/><path d="M23.500 7l6.800-4.500v14L23.500 12"/></svg>
<svg class="abs" style="left:222px;top:23px" width="12" height="10" viewBox="0 0 12 10" fill="none" stroke="#fff" stroke-width="1.700" stroke-linecap="round" stroke-linejoin="round"><path d="M2 7l4-4 4 4"/></svg><div class="tbl" style="left:122.5px">Video</div>
<svg class="abs" style="left:443px;top:17px" width="24" height="23" viewBox="0 0 24 23" fill="none" stroke="#fff" stroke-width="1.600" stroke-linecap="round" stroke-linejoin="round"><circle cx="6.800" cy="4.300" r="3"/><circle cx="16.300" cy="8" r="3"/><path d="M9.500 12.300c-.9-.5-1.800-.7-2.700-.7-3.300 0-5.500 2.200-5.500 5.300 0 1.700 1 2.800 2.800 2.800h3.500"/><path d="M10.800 18.300c0-2.700 2.200-4.700 5.500-4.700s5.500 2 5.500 4.700c0 1.800-1.200 2.900-2.900 2.900h-5.200c-1.700 0-2.900-1.100-2.900-2.900z"/></svg>
<div class="abs" style="left:476px;top:18px;font-size:14px;line-height:16px;color:#d8d8d8">15</div>
<svg class="abs" style="left:515px;top:23px" width="12" height="10" viewBox="0 0 12 10" fill="none" stroke="#fff" stroke-width="1.700" stroke-linecap="round" stroke-linejoin="round"><path d="M2 7l4-4 4 4"/></svg><div class="tbl" style="left:395.3px">Participants</div>
<svg class="abs" style="left:579px;top:16px" width="28" height="26" viewBox="0 0 28 26" fill="none" stroke="#fff" stroke-width="1.700" stroke-linejoin="round"><path d="M5.500 1.500h17a4 4 0 0 1 4 4v9.500a4 4 0 0 1-4 4h-7.500l-7.500 5.500 1-5.500h-3a4 4 0 0 1-4-4V5.500a4 4 0 0 1 4-4z"/></svg>
<svg class="abs" style="left:628px;top:23px" width="12" height="10" viewBox="0 0 12 10" fill="none" stroke="#fff" stroke-width="1.700" stroke-linecap="round" stroke-linejoin="round"><path d="M2 7l4-4 4 4"/></svg><div class="tbl" style="left:533.6px">Chat</div>
<svg class="abs" style="left:683px;top:13px" width="34" height="30" viewBox="0 0 34 30" fill="none" stroke="#fff" stroke-width="1.700" stroke-linejoin="round"><path d="M12.500 27.500C7 21 1.800 15 2.800 9.500 3.600 5.200 8 2.500 12 4.300c2.200 1 3.500 3 4 5.200 1.500-2 3.800-3.500 6.500-3.200 4.500.5 7.500 4.800 6 9-1.800 5-9.500 8.500-16 12.200z"/></svg>
<svg class="abs" style="left:728px;top:23px" width="12" height="10" viewBox="0 0 12 10" fill="none" stroke="#fff" stroke-width="1.700" stroke-linecap="round" stroke-linejoin="round"><path d="M2 7l4-4 4 4"/></svg><div class="tbl" style="left:640px">React</div>
<svg class="abs" style="left:789px;top:11px" width="28" height="33" viewBox="0 0 28 33" fill="none" stroke="#fff" stroke-width="1.600" stroke-linecap="round" stroke-linejoin="round"><path d="M6.500 18V7.500a1.900 1.900 0 0 1 3.800 0V15M10.300 14V4a1.900 1.900 0 0 1 3.800 0v10M14.100 14V5a1.900 1.900 0 0 1 3.800 0v10.500M17.900 15V8.500a1.900 1.900 0 0 1 3.800 0v12l2.300-3.800c.7-1.100 2-1.400 3-.7-1.300 4.500-2.800 8.300-4.800 11-2 2.800-4.800 4-8.200 4-5.500 0-9.500-4-9.500-10.500V11.500a1.900 1.900 0 0 1 3.800 0"/></svg>
<svg class="abs" style="left:838px;top:23px" width="12" height="10" viewBox="0 0 12 10" fill="none" stroke="#fff" stroke-width="1.700" stroke-linecap="round" stroke-linejoin="round"><path d="M2 7l4-4 4 4"/></svg><div class="tbl" style="left:745px">Raise hand</div>
<svg class="abs" style="left:905px;top:16px" width="32" height="24" viewBox="0 0 32 24" fill="none" stroke="#fff" stroke-width="1.700" stroke-linecap="round" stroke-linejoin="round"><rect x="1.300" y="1.300" width="29.400" height="21.400" rx="3.500"/><path d="M16 17.500V7M11.500 11.200L16 6.700l4.500 4.500"/></svg>
<svg class="abs" style="left:961px;top:23px" width="12" height="10" viewBox="0 0 12 10" fill="none" stroke="#fff" stroke-width="1.700" stroke-linecap="round" stroke-linejoin="round"><path d="M2 7l4-4 4 4"/></svg><div class="tbl" style="left:861.5px">Share</div>
<svg class="abs" style="left:1021px;top:14px" width="24" height="28" viewBox="0 0 24 28"><path d="M12 1.800c3.500 1.500 6.500 2.200 10 2.500v8c0 6-4 10.500-10 13.700C6 22.800 2 18.300 2 12.300v-8c3.500-.3 6.500-1 10-2.500z" fill="none" stroke="#fff" stroke-width="1.700" stroke-linejoin="round"/><path d="M12 5.500v8H5.200V7c2.500-.2 4.600-.7 6.800-1.500zM12 13.500h6.800c-.4 3.800-3 6.800-6.800 9z" fill="#fff"/></svg>
<div class="tbl" style="left:973px">Host tools</div>
<svg class="abs" style="left:1119px;top:12px" width="32" height="32" viewBox="0 0 32 32"><circle cx="16" cy="16" r="14.300" fill="none" stroke="#fff" stroke-width="1.700"/><circle cx="8.700" cy="16" r="1.500" fill="#fff"/><circle cx="16" cy="16" r="1.500" fill="#fff"/><circle cx="23.300" cy="16" r="1.500" fill="#fff"/></svg>
<div class="tbl" style="left:1075px">More</div>
<svg class="abs" style="left:1352px;top:14px" width="32" height="28" viewBox="0 0 32 28"><path d="M9 1.500h14l7 12.500-7 12.500H9L2 14z" fill="none" stroke="#f2185c" stroke-width="1.900" stroke-linejoin="round"/><path d="M11.500 9.500l9 9M20.500 9.500l-9 9" stroke="#fff" stroke-width="3.400" stroke-linecap="round"/></svg>
<div class="tbl" style="left:1308px">End</div>
</div>
<div id="ppanel">
<div class="abs" style="left:4px;top:5px;width:467px;height:55px;background:#1c1e21;border-radius:8px 8px 0 0"></div>
<div class="abs" style="left:0;top:23px;width:409px;text-align:center;font-weight:bold;font-size:16px;line-height:20px;color:#fff">Participants (15)</div>
<svg class="abs" style="left:405px;top:22px" width="20" height="20" viewBox="0 0 20 20" fill="none" stroke="#b4b4b6" stroke-width="1.700" stroke-linecap="round" stroke-linejoin="round"><path d="M9.500 3H5.500a3 3 0 0 0-3 3v8.500a3 3 0 0 0 3 3H14a3 3 0 0 0 3-3v-4"/><path d="M12.500 2h5.500v5.500M17.700 2.300L9.500 10.500"/></svg>
<svg class="abs" style="left:441px;top:25px" width="15" height="15" viewBox="0 0 15 15" stroke="#c4c4c6" stroke-width="1.400" stroke-linecap="round"><path d="M1.500 1.500l12 12M13.500 1.500l-12 12"/></svg>
<div class="abs" style="left:27px;top:73px;width:423px;height:40px;border:1px solid #6c6c6e;border-radius:9px"></div>
<svg class="abs" style="left:41px;top:85px" width="17" height="17" viewBox="0 0 17 17" fill="none" stroke="#a8a8aa" stroke-width="1.300" stroke-linecap="round"><circle cx="7" cy="7" r="5.300"/><path d="M11 11l4.300 4.300"/></svg>
<div class="abs" style="left:62px;top:83px;font-size:15.500px;line-height:20px;color:#a2a2a4;white-space:nowrap">Find a participant</div>
<div class="abs" style="left:458px;top:116px;width:10px;height:224px;background:#efeff4;border-radius:5px"></div>
<div class="abs" style="left:458px;top:116px;width:10px;height:82px;background:#b2b2ba;border-radius:5px"></div>
<div class="abs" style="left:0;top:116px;width:456px;height:224px;overflow:hidden" id="plist"><svg class="abs" style="left:24px;top:8px;margin-top:-1px" width="35" height="35" viewBox="0 0 35 35"><defs><clipPath id="ac1"><rect width="35" height="35" rx="9"/></clipPath></defs><g clip-path="url(#ac1)"><rect width="35" height="35" fill="#3a2614"/><g filter="url(#bl1)"><rect x="0" y="0" width="9" height="35" fill="#5a3a16"/><rect x="26" y="0" width="9" height="35" fill="#4a3218"/><ellipse cx="18" cy="10" rx="6.500" ry="7" fill="#c98a3c"/><ellipse cx="18" cy="11" rx="4" ry="5" fill="#e8c4a4"/><path d="M8 35c0-12 4-17 10-17s10 5 10 17z" fill="#8a9a38"/><path d="M11 24l10 2-3 9h-8z" fill="#e8e4dc"/><path d="M12 27l8 2M11 30l8 2" stroke="#d8823a" stroke-width="1.200"/></g></g></svg><div class="pname" style="top:16px">Наталія Мацейко (Host, me)</div><svg class="abs" style="left:389px;top:14px" width="22" height="22" viewBox="0 0 22 22" fill="none" stroke="#ee555a" stroke-width="1.300" stroke-linecap="round"><rect x="8.300" y="3.500" width="5.400" height="9.500" rx="2.700"/><path d="M5.500 10.800a5.500 5.500 0 0 0 11 0M11 16.500v3M8.500 19.700h5"/><path d="M1.500 21L20.500 1.500"/></svg><svg class="abs" style="left:419px;top:17px" width="22" height="16" viewBox="0 0 22 16" fill="none" stroke="#a4a4a6" stroke-width="1.200" stroke-linejoin="round" stroke-linecap="round"><rect x="1" y="2.500" width="14" height="11" rx="3"/><path d="M15.800 6.300l5-3v9.400l-5-3"/></svg><svg class="abs" style="left:24px;top:59px;margin-top:-1px" width="35" height="35" viewBox="0 0 35 35"><defs><clipPath id="ac2"><rect width="35" height="35" rx="9"/></clipPath></defs><g clip-path="url(#ac2)"><rect width="35" height="35" fill="#2e2a1e"/><g filter="url(#bl1)"><rect x="0" y="0" width="10" height="35" fill="#5a5230"/><path d="M9 35C7 14 12 2 20 2s13 10 10 33z" fill="#c05a20"/><ellipse cx="20" cy="14" rx="5" ry="6.500" fill="#eec0a0"/><path d="M12 35c1-8 4-11 8-11s7 3 8 11z" fill="#d0201c"/><rect x="27" y="20" width="8" height="15" fill="#1a1a1a"/><rect x="0" y="26" width="9" height="9" fill="#1c1c1a"/></g></g></svg><div class="pname" style="top:67px">Катерина Петровська</div><svg class="abs" style="left:360px;top:69px" width="21" height="15" viewBox="0 0 21 15" fill="none" stroke="#19d97b" stroke-width="1.200" stroke-linecap="round" stroke-linejoin="round"><rect x="0.700" y="0.700" width="19.600" height="13.600" rx="2"/><path d="M10.500 11.500V4.500M7.500 7l3-3 3 3"/></svg><svg class="abs" style="left:389px;top:65px" width="22" height="22" viewBox="0 0 22 22" fill="none" stroke="#a4a4a6" stroke-width="1.200" stroke-linecap="round"><rect x="8" y="2" width="6" height="11" rx="3" fill="#8a8a8c"/><path d="M5.300 10.500a5.700 5.700 0 0 0 11.400 0M11 16.300v3.200M8.300 19.700h5.400"/></svg><svg class="abs" style="left:419px;top:68px" width="22" height="16" viewBox="0 0 22 16" fill="none" stroke="#a4a4a6" stroke-width="1.200" stroke-linejoin="round" stroke-linecap="round"><rect x="1" y="2.500" width="14" height="11" rx="3"/><path d="M15.800 6.300l5-3v9.400l-5-3"/></svg><div class="abs" style="left:24px;top:110px;width:35px;height:35px;margin-top:-1px;border-radius:9px;background:#2b83c6;color:#fff;font-weight:bold;font-size:15px;line-height:35px;text-align:center">AM</div><div class="pname" style="top:118px">Alla Melnychuk</div><svg class="abs" style="left:389px;top:116px" width="22" height="22" viewBox="0 0 22 22" fill="none" stroke="#ee555a" stroke-width="1.300" stroke-linecap="round"><rect x="8.300" y="3.500" width="5.400" height="9.500" rx="2.700"/><path d="M5.500 10.800a5.500 5.500 0 0 0 11 0M11 16.500v3M8.500 19.700h5"/><path d="M1.500 21L20.500 1.500"/></svg><svg class="abs" style="left:419px;top:119px" width="22" height="16" viewBox="0 0 22 16" fill="none" stroke="#a4a4a6" stroke-width="1.200" stroke-linejoin="round" stroke-linecap="round"><rect x="1" y="2.500" width="14" height="11" rx="3"/><path d="M15.800 6.300l5-3v9.400l-5-3"/></svg><div class="abs" style="left:24px;top:161px;width:35px;height:35px;margin-top:-1px;border-radius:9px;background:#d35400;color:#fff;font-weight:bold;font-size:15px;line-height:35px;text-align:center">LL</div><div class="pname" style="top:169px">Lukianchenko Lyusiena</div><svg class="abs" style="left:389px;top:167px" width="22" height="22" viewBox="0 0 22 22" fill="none" stroke="#ee555a" stroke-width="1.300" stroke-linecap="round"><rect x="8.300" y="3.500" width="5.400" height="9.500" rx="2.700"/><path d="M5.500 10.800a5.500 5.500 0 0 0 11 0M11 16.500v3M8.500 19.700h5"/><path d="M1.500 21L20.500 1.500"/></svg><svg class="abs" style="left:419px;top:170px" width="22" height="16" viewBox="0 0 22 16" fill="none" stroke="#ee555a" stroke-width="1.300" stroke-linejoin="round" stroke-linecap="round"><rect x="1" y="2.500" width="14" height="11" rx="3"/><path d="M15.800 6.300l5-3v9.400l-5-3"/><path d="M1 15.500L20.500 0.500"/></svg><div class="abs" style="left:24px;top:212px;width:35px;height:35px;margin-top:-1px;border-radius:9px;background:#d35400;color:#fff;font-weight:bold;font-size:15px;line-height:35px;text-align:center"></div><svg class="abs" style="left:389px;top:218px" width="22" height="22" viewBox="0 0 22 22" fill="none" stroke="#ee555a" stroke-width="1.300" stroke-linecap="round"><rect x="8.300" y="3.500" width="5.400" height="9.500" rx="2.700"/><path d="M5.500 10.800a5.500 5.500 0 0 0 11 0M11 16.500v3M8.500 19.700h5"/><path d="M1.500 21L20.500 1.500"/></svg><svg class="abs" style="left:419px;top:221px" width="22" height="16" viewBox="0 0 22 16" fill="none" stroke="#a4a4a6" stroke-width="1.200" stroke-linejoin="round" stroke-linecap="round"><rect x="1" y="2.500" width="14" height="11" rx="3"/><path d="M15.800 6.300l5-3v9.400l-5-3"/></svg></div>
<div class="pbtn" style="left:75px;width:67px">Invite</div>
<div class="pbtn" style="left:213px;width:85px">Mute all</div>
<div class="pbtn" style="left:369px;width:29px;font-weight:bold;letter-spacing:0.5px;line-height:22px">...</div>
</div>
<div id="cpanel">
<div class="abs" style="left:4px;top:4px;width:467px;height:55px;background:#1c1e21;border-radius:8px 8px 0 0"></div>
<svg class="abs" style="left:36px;top:20px" width="22" height="21" viewBox="0 0 22 21" fill="none" stroke="#4f97f5" stroke-width="1.300" stroke-linejoin="round"><path d="M3 1h8.500a2 2 0 0 1 2 2v5a2 2 0 0 1-2 2H6l-3 2.500V10a2 2 0 0 1-2-2V3a2 2 0 0 1 2-2z"/><path d="M15.500 6.500h3a2 2 0 0 1 2 2v5.500a2 2 0 0 1-2 2v3l-3.500-3H10.500a2 2 0 0 1-2-2v-1.500"/></svg>
<div class="abs" style="left:62px;top:22px;font-weight:bold;font-size:16px;line-height:20px;color:#4f97f5;white-space:nowrap;letter-spacing:-0.1px" id="ctitle">Засідання Ради роботодавців спе...</div>
<svg class="abs" style="left:373px;top:28px" width="18" height="6" viewBox="0 0 18 6" fill="#b4b4b6"><circle cx="3" cy="3" r="1.500"/><circle cx="9" cy="3" r="1.500"/><circle cx="15" cy="3" r="1.500"/></svg>
<svg class="abs" style="left:405px;top:21px" width="20" height="20" viewBox="0 0 20 20" fill="none" stroke="#b4b4b6" stroke-width="1.700" stroke-linecap="round" stroke-linejoin="round"><path d="M9.500 3H5.500a3 3 0 0 0-3 3v8.500a3 3 0 0 0 3 3H14a3 3 0 0 0 3-3v-4"/><path d="M12.500 2h5.500v5.500M17.700 2.300L9.500 10.500"/></svg>
<svg class="abs" style="left:441px;top:24px" width="15" height="15" viewBox="0 0 15 15" stroke="#c4c4c6" stroke-width="1.400" stroke-linecap="round"><path d="M1.500 1.500l12 12M13.500 1.500l-12 12"/></svg>
<div id="cbody" class="abs" style="left:4px;top:59px;width:467px;height:290px;background:#12161a;overflow:hidden">
<div class="abs" style="left:453px;top:0;width:10px;height:290px;background:#f2f2f7;border-radius:5px"></div>
<div class="abs" style="left:453px;top:216px;width:10px;height:53px;background:#aeaeb6;border-radius:5px"></div>
<div class="bub" style="left:56px;top:-30px;width:213px;height:36px"></div>
<div class="cname" style="left:62px;top:19px"><span class="cn" style="letter-spacing:-0.75px">Yanina KRAVCHENKO</span> <span class="ct">15:37</span></div>
<div class="cav" style="left:16px;top:41px;background:#3a4d66">YK</div>
<div class="bub" style="left:54px;top:40px;width:241px;height:48px;padding-left:18px">Однозначно важливо!!!</div>
<div class="cname" style="left:62px;top:101px"><span class="cn">Юлія Данильчук</span> <span class="ct">15:37</span></div>
<div class="cav" style="left:16px;top:123px;background:#2b83c6">Ю</div>
<div class="bub" style="left:54px;top:122px;width:84px;height:48px;padding-left:14px;letter-spacing:3.600px">++++</div>
<div class="cname" style="left:62px;top:183px"><span class="cn">Mariia Shurdenko</span> <span class="ct">15:52</span></div>
<div class="cav" style="left:16px;top:205px;background:#d35400">MS</div>
<div class="bub" style="left:54px;top:204px;width:339px;height:73px;padding:10px 0 0 13px;line-height:25px">тренінг з "етичної комунікації" що<br>важливо</div>
<div class="bub" style="left:54px;top:280px;width:339px;height:40px"></div>
</div>
<div class="abs" style="left:4px;top:349px;width:467px;height:31px;background:#2b2c2e;border-bottom:1px solid #3c3d3f"></div>
<svg class="abs" style="left:131px;top:355px" width="20" height="20" viewBox="0 0 20 20" fill="none" stroke="#a4a4a6" stroke-width="1.300" stroke-linecap="round"><circle cx="8.500" cy="5.500" r="3.300"/><path d="M10 11.200c-.5-.1-1-.2-1.500-.2-3.500 0-6 2-6 4.500 0 .8.600 1.300 1.400 1.300H9.500"/><path d="M14.500 10.500l4 1.300v2.500c0 2.200-1.700 3.800-4 4.700-2.300-.9-4-2.500-4-4.700v-2.500z" fill="#2f8cff" stroke="none"/></svg>
<div class="abs" style="left:154px;top:355px;font-size:14.500px;letter-spacing:-0.2px;line-height:20px;color:#a2a2a4;white-space:nowrap" id="who">Who can see your messages?</div>
<div class="abs" style="left:4px;top:381px;width:467px;height:149px;background:#12161a;border-radius:0 0 8px 8px"></div>
<div class="abs" style="left:19px;top:402px;font-size:15.500px;line-height:20px;color:#fff">To:</div>
<div class="abs" style="left:49px;top:398px;width:156px;height:29px;border-radius:7px;background:#0b6ae6;font-size:14.200px;line-height:28px;color:#fff;padding-left:9px;white-space:nowrap" id="mgc">Meeting group chat<svg style="position:absolute;left:135px;top:11px" width="12" height="8" viewBox="0 0 12 8" fill="none" stroke="#fff" stroke-width="1.700" stroke-linecap="round" stroke-linejoin="round"><path d="M2 2l4 4 4-4"/></svg></div>
<div class="abs" style="left:13px;top:435px;width:1px;height:25px;background:#d0d0d0"></div>
<div class="abs" style="left:14px;top:435px;font-size:18px;line-height:25.500px;color:#8c8c8e;white-space:nowrap;letter-spacing:0.24px" id="ph">Message Засідання Ради роботодавців<br>спеціальності I10 Соціальна робота та</div>
<div class="abs" style="left:23px;top:495px;font-family:'Liberation Serif',serif;font-size:23px;line-height:22px;color:#9a9a9c">T</div>
<svg class="abs" style="left:62px;top:496px" width="20" height="20" viewBox="0 0 20 20" fill="none" stroke="#a4a4a6" stroke-width="1.300" stroke-linecap="round"><circle cx="10" cy="10" r="8.300"/><path d="M6.300 11.800c1 1.600 2.200 2.300 3.700 2.300s2.700-.7 3.700-2.300"/><circle cx="7.200" cy="7.800" r="1" fill="#a4a4a6" stroke="none"/><circle cx="12.800" cy="7.800" r="1" fill="#a4a4a6" stroke="none"/></svg>
<div class="abs" style="left:102px;top:497px;font-family:'Liberation Mono','DejaVu Sans Mono',monospace;font-weight:bold;font-size:13px;line-height:18px;letter-spacing:-0.8px;color:#a4a4a6">GIF</div>
<svg class="abs" style="left:145px;top:496px" width="18" height="21" viewBox="0 0 18 21" fill="none" stroke="#a4a4a6" stroke-width="1.400" stroke-linejoin="round"><path d="M4 1.500h6.500l5.500 5.500v10a2.500 2.500 0 0 1-2.500 2.500H4A2.500 2.500 0 0 1 1.500 17V4A2.500 2.500 0 0 1 4 1.500z"/><path d="M10.500 1.500V7h5.500"/></svg>
<svg class="abs" style="left:185px;top:496px" width="20" height="20" viewBox="0 0 20 20" fill="none" stroke="#a4a4a6" stroke-width="1.400" stroke-linecap="round"><path d="M10 14.500H4.500a3 3 0 0 1-3-3V4.500a3 3 0 0 1 3-3h7a3 3 0 0 1 3 3V10"/><path d="M15 12.500v5M12.500 15h5" stroke-width="1.200"/></svg>
<svg class="abs" style="left:220px;top:503px" width="11" height="7" viewBox="0 0 11 7" fill="none" stroke="#a4a4a6" stroke-width="1.300" stroke-linecap="round" stroke-linejoin="round"><path d="M2 1.500l3.500 3.500 3.500-3.500"/></svg>
<div class="abs" style="left:430px;top:490px;width:30px;height:30px;border-radius:7px;background:#2a2c30"></div>
<svg class="abs" style="left:436px;top:497px" width="18" height="16" viewBox="0 0 18 16" fill="#808286"><path d="M1 2.800L17 1.200 9 14.800 7.300 8.300z"/><path d="M7.300 8.300L12 5" stroke="#2a2c30" stroke-width="1.200"/></svg>
</div>
<div id="taskbar">
<svg class="abs" style="left:27px;top:16px" width="26" height="26" viewBox="0 0 26 26"><defs><linearGradient id="sun" x1="0" y1="0" x2="1" y2="1"><stop offset="0" stop-color="#fbb03b"/><stop offset="1" stop-color="#f27a1a"/></linearGradient></defs><circle cx="13" cy="13" r="12.500" fill="url(#sun)"/></svg>
<div class="abs" style="left:64px;top:10px;font-size:13px;line-height:18px;color:#1f1f1f">16°C</div>
<div class="abs" style="left:64px;top:30px;font-size:14.500px;line-height:18px;color:#5c5c5c">Sunny</div>
<svg class="abs" style="left:585px;top:16px" width="29" height="29" viewBox="0 0 29 29"><defs><linearGradient id="win" x1="0" y1="0" x2="1" y2="1"><stop offset="0" stop-color="#4cc4ff"/><stop offset="1" stop-color="#0a68d6"/></linearGradient></defs><path d="M0 1.500a1.500 1.500 0 0 1 1.500-1.500H13.700V13.700H0zM15.300 0H27.500A1.500 1.500 0 0 1 29 1.500V13.700H15.300zM0 15.300H13.700V29H1.500A1.500 1.500 0 0 1 0 27.500zM15.300 15.300H29V27.500a1.500 1.500 0 0 1-1.500 1.500H15.300z" fill="url(#win)"/></svg>
<div class="abs" style="left:632px;top:10.5px;width:274px;height:39px;border-radius:20px;background:#eff4fa;border:1px solid #c9d3dc;box-shadow:0 1px 1px rgba(0,0,0,.08)"></div>
<svg class="abs" style="left:644px;top:20px" width="22" height="22" viewBox="0 0 22 22" fill="none" stroke="#222" stroke-width="2" stroke-linecap="round"><circle cx="9.500" cy="9.500" r="6.500"/><path d="M14.500 14.500l4.500 4.500"/></svg>
<div class="abs" style="left:677px;top:20px;font-size:17.500px;line-height:22px;color:#5e5e5e">Пошук</div>
<svg class="abs" style="left:839px;top:14px" width="62" height="32" viewBox="0 0 62 32"><ellipse cx="31" cy="18" rx="29" ry="10" fill="#b8c0e0" opacity=".7"/><ellipse cx="31" cy="26.500" rx="26" ry="4.500" fill="#5ab8b8"/><ellipse cx="31" cy="23" rx="29" ry="3.500" fill="#c89a30"/><g fill="#1f7a5a"><path d="M10 3l4.500 17h-9z"/><path d="M17 6l4 14h-8z"/><path d="M27 8l3.500 12h-7z"/><path d="M39 1l5 19H34z"/><path d="M47 7l4 13h-8z"/><path d="M53 10l3 10h-6z"/></g><g fill="#d8a838"><ellipse cx="14" cy="21" rx="6" ry="2.500"/><ellipse cx="32" cy="21.500" rx="7" ry="2.500"/><ellipse cx="49" cy="21" rx="6" ry="2.500"/></g></svg>
<div class="abs" style="left:929px;top:16px;width:22px;height:19px;border-radius:3px;background:linear-gradient(135deg,#fafafa,#d8d8d8);box-shadow:0 0 1px #999"></div>
<div class="abs" style="left:921px;top:24px;width:23px;height:20px;border-radius:3px;background:linear-gradient(135deg,#4a4a4a,#1c1c1c)"></div>
<div class="abs" style="left:929px;top:24px;width:15px;height:11px;background:linear-gradient(135deg,#c4c4c4,#8c8c8c);border-radius:0 0 0 2px"></div>
<!-- explorer -->
<svg class="abs" style="left:975px;top:16px" width="32" height="28" viewBox="0 0 32 28"><path d="M1 3.500A2.500 2.500 0 0 1 3.500 1h8l3 3.500H30.500V10H1z" fill="#e8a51c"/><rect x="1" y="6" width="30" height="21" rx="2" fill="#fcd253"/><path d="M1 18h30v7a2 2 0 0 1-2 2H3a2 2 0 0 1-2-2z" fill="#f9c12e"/><path d="M6 21a3 3 0 0 1 3-3h14a3 3 0 0 1 3 3v6H6z" fill="#1b86d8"/><rect x="10" y="21.500" width="12" height="2" rx="1" fill="#0e5fa8"/></svg>
<!-- edge -->
<svg class="abs" style="left:1031px;top:15px" width="30" height="30" viewBox="0 0 30 30"><defs><linearGradient id="ed1" x1="0" y1="0" x2="1" y2="0"><stop offset="0" stop-color="#2aa8e8"/><stop offset=".5" stop-color="#33c0a8"/><stop offset="1" stop-color="#86dc48"/></linearGradient><linearGradient id="ed2" x1="0" y1="0" x2="1" y2="1"><stop offset="0" stop-color="#1b9de2"/><stop offset="1" stop-color="#0c4a9c"/></linearGradient></defs>
<path d="M15 .5C7 .5 .5 7 .5 15c0 8 6.500 14.500 14.500 14.500 4.500 0 8.500-2 11-5-2 1-4.500 1.500-7 1-5-1-8-5-7.500-9.500.3-3 2-5 4.500-6z" fill="url(#ed2)"/>
<path d="M.8 13C2 5.500 8 .5 15 .5c8 0 14.500 5.500 14.500 12.500 0 4.500-3.200 7-6.800 7-3 0-5-1-5-2.500 0-1 1.200-1.600 1.200-3.500 0-2.800-2.600-4.800-5.900-4.800C7.500 9.200 2.500 12 .8 17z" fill="url(#ed1)"/>
<path d="M11.500 16c-.5 4.500 2.500 8.500 7.500 9.500 2.500.5 5 0 7-1-3 3.500-8 4.500-12 3-4-1.500-6.500-5-6.500-9 0-3 1.500-5.500 4-7 1.500-.8 3-1 4-.8-2.200.9-3.700 2.800-4 5.300z" fill="#1560b8"/>
</svg>
<!-- store -->
<svg class="abs" style="left:1086px;top:15px" width="30" height="30" viewBox="0 0 30 30"><defs><linearGradient id="st" x1="0" y1="0" x2="0" y2="1"><stop offset="0" stop-color="#1468b8"/><stop offset="1" stop-color="#10427e"/></linearGradient></defs><path d="M8.500 6.500V3.500A2 2 0 0 1 10.500 1.500h9a2 2 0 0 1 2 2v3" fill="none" stroke="#38b8f0" stroke-width="2"/><path d="M.5 6.500h29v20a3 3 0 0 1-3 3h-23a3 3 0 0 1-3-3z" fill="url(#st)"/><rect x="9.500" y="12" width="5" height="5" fill="#f25022"/><rect x="15.500" y="12" width="5" height="5" fill="#7fba00"/><rect x="9.500" y="18" width="5" height="5" fill="#00a4ef"/><rect x="15.500" y="18" width="5" height="5" fill="#ffb900"/></svg>
<svg class="abs" style="left:1141px;top:15px" width="30" height="30" viewBox="0 0 48 48"><defs><clipPath id="cc1"><circle cx="24" cy="24" r="23"/></clipPath></defs><g clip-path="url(#cc1)"><path d="M24 24L4.100 12.500A23 23 0 0 1 43.900 12.500z" fill="#ea4335"/><path d="M24 24L43.900 12.500A23 23 0 0 1 24 47z" fill="#fbbc04"/><path d="M24 24L24 47A23 23 0 0 1 4.100 12.500z" fill="#34a853"/><path d="M24 13.200H43.500L43.900 12.500 24 24z" fill="#ea4335"/><path d="M33.400 29.400L23.600 46.400 24 47l9.400-17.600z" fill="#fbbc04"/><path d="M14.600 29.400L4.800 12.500 14.600 29.400z" fill="#34a853"/></g><circle cx="24" cy="24" r="10.800" fill="#fff"/><circle cx="24" cy="24" r="8.600" fill="#4285f4"/></svg>
<svg class="abs" style="left:1196px;top:15px" width="30" height="30" viewBox="0 0 48 48"><defs><clipPath id="cc2"><circle cx="24" cy="24" r="23"/></clipPath></defs><g clip-path="url(#cc2)"><path d="M24 24L4.100 12.500A23 23 0 0 1 43.900 12.500z" fill="#ea4335"/><path d="M24 24L43.900 12.500A23 23 0 0 1 24 47z" fill="#fbbc04"/><path d="M24 24L24 47A23 23 0 0 1 4.100 12.500z" fill="#34a853"/><path d="M24 13.200H43.500L43.900 12.500 24 24z" fill="#ea4335"/><path d="M33.400 29.400L23.600 46.400 24 47l9.400-17.600z" fill="#fbbc04"/><path d="M14.600 29.400L4.800 12.500 14.600 29.400z" fill="#34a853"/></g><circle cx="24" cy="24" r="10.800" fill="#fff"/><circle cx="24" cy="24" r="8.600" fill="#4285f4"/></svg>
<svg class="abs" style="left:1211px;top:9px" width="21" height="21" viewBox="0 0 21 21"><defs><clipPath id="bdg"><circle cx="10.500" cy="10.500" r="10"/></clipPath></defs><g clip-path="url(#bdg)"><rect width="21" height="21" fill="#3a2614"/><g filter="url(#bl1)"><rect x="0" y="0" width="5" height="21" fill="#5a3a16"/><ellipse cx="11" cy="6.500" rx="4" ry="4.500" fill="#c98a3c"/><ellipse cx="11" cy="7" rx="2.500" ry="3" fill="#e8c4a4"/><path d="M5 21c0-7 2.500-10 6-10s6 3 6 10z" fill="#8a9a38"/><path d="M7 14l6 1-2 6H6z" fill="#e8e4dc"/></g></g></svg>
<!-- zoom -->
<svg class="abs" style="left:1251px;top:15px" width="34" height="30" viewBox="0 0 34 30"><path d="M15 0c9 0 15 3.500 15 15s-6 15-15 15S0 26.500 0 15 6 0 15 0z" fill="#0b5cff"/><text x="15" y="17.800" font-family="Liberation Sans, sans-serif" font-weight="bold" font-size="7.800" fill="#fff" text-anchor="middle">zoom</text><circle cx="28.800" cy="6.300" r="4.800" fill="#f0323c"/></svg>
<!-- word -->
<svg class="abs" style="left:1305px;top:16px" width="28" height="28" viewBox="0 0 28 28"><defs><linearGradient id="wd" x1="0" y1="0" x2="1" y2="1"><stop offset="0" stop-color="#48c8f8"/><stop offset=".5" stop-color="#2a8af0"/><stop offset="1" stop-color="#0a38c0"/></linearGradient></defs><rect x="6" y="0.500" width="21.500" height="27" rx="3" fill="url(#wd)"/><rect x="6" y="0.500" width="21.500" height="9" rx="3" fill="#58d0f8" opacity=".8"/><rect x="6" y="18.500" width="21.500" height="9" rx="3" fill="#0c34b8" opacity=".8"/><rect x="0" y="12.500" width="13.500" height="13.500" rx="2.500" fill="#1848c8"/><text x="6.800" y="23.300" font-family="Liberation Sans, sans-serif" font-weight="bold" font-size="10.500" fill="#fff" text-anchor="middle">W</text></svg>
<div class="abs" style="left:1207px;top:50px;width:8px;height:3px;border-radius:2px;background:#8c8c8e"></div>
<div class="abs" style="left:1262px;top:50px;width:8px;height:3px;border-radius:2px;background:#8c8c8e"></div>
<div class="abs" style="left:1317px;top:50px;width:8px;height:3px;border-radius:2px;background:#8c8c8e"></div>
<!-- tray -->
<svg class="abs" style="left:1586px;top:24px" width="16" height="11" viewBox="0 0 16 11" fill="none" stroke="#1a1a1a" stroke-width="1.700" stroke-linecap="round" stroke-linejoin="round"><path d="M1.500 8.500L8 2.500l6.500 6"/></svg>
<svg class="abs" style="left:1621px;top:20px" width="13" height="16" viewBox="0 0 13 16" fill="none" stroke="#1a5fc8" stroke-width="1.300" stroke-linecap="round"><rect x="3.800" y="0.800" width="5.400" height="8.800" rx="2.700" fill="#1a5fc8"/><path d="M1.200 7.500a5.300 5.300 0 0 0 10.600 0M6.500 12.800v2.500"/></svg>
<svg class="abs" style="left:1634px;top:26px" width="14" height="14" viewBox="0 0 14 14" fill="none" stroke="#1a5fc8" stroke-width="1.300" stroke-linejoin="round"><path d="M12.800 1.200L1.200 6l5.300 1.500L8 12.800z"/></svg>
<div class="abs" style="left:1670px;top:22px;font-size:13px;line-height:17px;color:#1a1a1a;letter-spacing:-0.3px">УКР</div>
<svg class="abs" style="left:1718px;top:21px" width="22" height="17" viewBox="0 0 22 17" fill="none" stroke="#1a1a1a" stroke-width="1.400" stroke-linecap="round"><path d="M1.500 6.500a13.500 13.500 0 0 1 19 0M4.500 9.700a9.200 9.200 0 0 1 13 0M7.500 12.700a5 5 0 0 1 7 0"/><circle cx="11" cy="15" r="1.200" fill="#1a1a1a" stroke="none"/></svg>
<svg class="abs" style="left:1748px;top:21px" width="22" height="18" viewBox="0 0 22 18" fill="none" stroke="#1a1a1a" stroke-width="1.300" stroke-linecap="round" stroke-linejoin="round"><path d="M1.500 6.500h3l4.500-4v13l-4.500-4h-3z"/><path d="M12 6.500a3.500 3.500 0 0 1 0 5M14.700 4a7 7 0 0 1 0 10M17.400 1.500a10.500 10.500 0 0 1 0 15"/></svg>
<svg class="abs" style="left:1778px;top:19px" width="27" height="19" viewBox="0 0 27 19"><rect x="1.300" y="6" width="22" height="11.500" rx="3" fill="none" stroke="#1a1a1a" stroke-width="1.400"/><rect x="3.300" y="8" width="18" height="7.500" rx="1.500" fill="#1a8c1a"/><path d="M24.300 9.500v4.500" stroke="#1a1a1a" stroke-width="1.600" stroke-linecap="round"/><path d="M13.500 0l-4 7h3l-1 5.500 4.500-7.500h-3z" fill="#1a1a1a" stroke="#d8e6f0" stroke-width=".8"/></svg>
<div class="abs" style="left:1795px;width:100px;top:11px;font-size:13.500px;line-height:17px;color:#1a1a1a;text-align:right">15:55</div>
<div class="abs" style="left:1795px;width:100px;top:31.5px;font-size:13.500px;line-height:17px;color:#1a1a1a;text-align:right">15.04.2026</div>
</div>
</body>
</html>
